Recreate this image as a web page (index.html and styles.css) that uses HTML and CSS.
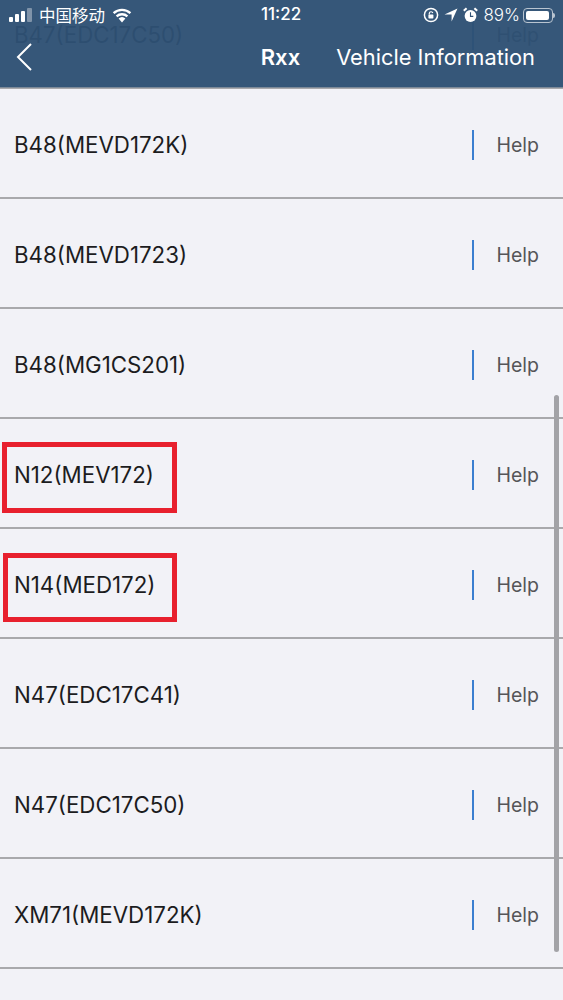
FILE: index.html
```html
<!DOCTYPE html>
<html lang="en">
<head>
<meta charset="utf-8">
<title>Vehicle Information</title>
<link rel="stylesheet" href="styles.css">
</head>
<body>
<div class="screen">
  <ul class="list">
    <li class="row"><span class="name">B47(EDC17C50)</span><span class="help">Help</span></li>
    <li class="row"><span class="name">B48(MEVD172K)</span><span class="help">Help</span></li>
    <li class="row"><span class="name">B48(MEVD1723)</span><span class="help">Help</span></li>
    <li class="row"><span class="name">B48(MG1CS201)</span><span class="help">Help</span></li>
    <li class="row"><span class="name">N12(MEV172)</span><span class="help">Help</span></li>
    <li class="row"><span class="name">N14(MED172)</span><span class="help">Help</span></li>
    <li class="row"><span class="name">N47(EDC17C41)</span><span class="help">Help</span></li>
    <li class="row"><span class="name">N47(EDC17C50)</span><span class="help">Help</span></li>
    <li class="row"><span class="name">XM71(MEVD172K)</span><span class="help">Help</span></li>
  </ul>
  <header class="header">
    <div class="status">
      <div class="status-left">
        <svg class="signal" width="24" height="14" viewBox="0 0 24 14"><rect x="0" y="9" width="4" height="5" rx="1" fill="#fff"/><rect x="6" y="6" width="4" height="8" rx="1" fill="#fff"/><rect x="12" y="3" width="4" height="11" rx="1" fill="#fff"/><rect x="18" y="0" width="5" height="14" rx="1" fill="#7f93a9"/></svg>
        <span class="carrier">中国移动</span>
        <svg class="wifi" width="22" height="16" viewBox="0 0 22 16"><path d="M11 15.5 7.6 11.6a5 5 0 0 1 6.8 0Z" fill="#fff"/><path d="M5.6 9.4a8 8 0 0 1 10.8 0M2.6 6.2a12.4 12.4 0 0 1 16.8 0" fill="none" stroke="#fff" stroke-width="2.4"/></svg>
      </div>
      <span class="time">11:22</span>
      <div class="status-right">
        <svg width="16" height="16" viewBox="0 0 16 16"><circle cx="8" cy="8" r="6.6" fill="none" stroke="#fff" stroke-width="1.5"/><rect x="5.4" y="7.4" width="5" height="4" rx=".6" fill="#fff"/><path d="M6.3 7.4V6.3a1.8 1.8 0 0 1 3.5-.3" fill="none" stroke="#fff" stroke-width="1.2"/></svg>
        <svg class="arrow" width="14" height="14" viewBox="0 0 14 14"><path d="M13.5.5 7.6 13.5V6.5H.5Z" fill="#fff"/></svg>
        <svg class="alarm" width="15" height="16" viewBox="0 0 15 16"><circle cx="7.5" cy="9" r="5.9" fill="#fff"/><path d="M7.5 5.2v4.2h2.8" fill="none" stroke="#325479" stroke-width="1.1"/><path d="M.8 3.8 3.6 1.2M14.2 3.8 11.4 1.2" stroke="#fff" stroke-width="2"/></svg>
        <span class="percent">89%</span>
        <div class="battery"><div class="battery-fill"></div></div>
        <div class="battery-tip"></div>
      </div>
    </div>
    <div class="nav">
      <svg class="back" width="16" height="28" viewBox="0 0 16 28"><path d="M15 1 2 14l13 13" fill="none" stroke="#fff" stroke-width="2"/></svg>
      <div class="tabs">
        <span class="rxx">Rxx</span>
        <span class="vehicle">Vehicle Information</span>
      </div>
    </div>
  </header>
  <div class="mark mark-one"></div>
  <div class="mark mark-two"></div>
  <div class="scrollbar"></div>
</div>
</body>
</html>
```
FILE: styles.css
```css
* { box-sizing: border-box; }
html, body { margin: 0; padding: 0; }
body { background: #f2f2f7; font-family: Inter, Roboto, "Noto Sans", sans-serif; }
.screen { position: relative; width: 563px; height: 1000px; overflow: hidden; background: #f2f2f7; }
.list { list-style: none; margin: -21px 0 0; padding: 0; }
.row { height: 110px; display: flex; align-items: center; justify-content: space-between; padding: 3px 24px 0 14px; border-bottom: 2px solid #a9a9ac; }
.name { font-size: 22.3px; color: #1c1c1e; margin-top: -1px; }
.help { font-size: 19.5px; color: #555558; border-left: 2px solid #3b7fd0; height: 30px; line-height: 30px; padding-left: 22px; }
.header { position: absolute; top: 0; left: 0; width: 563px; height: 88px; background: rgba(46, 80, 116, 0.96); color: #fff; border-bottom: 1px solid #7d8a99; }
.status { height: 30px; position: relative; display: flex; align-items: center; justify-content: space-between; padding: 0 8px 0 9px; }
.status-left, .status-right { display: flex; align-items: center; }
.status-left { gap: 6px; }
.status-right { gap: 5px; }
.carrier { font: 16.5px "Noto Sans CJK SC", sans-serif; }
.time { position: absolute; left: 261px; top: 4px; font-size: 17px; font-weight: 500; }
.percent { font-size: 17px; font-weight: 300; }
.battery { width: 30px; height: 15px; border: 1px solid #b9c4d0; border-radius: 4px; padding: 2px; margin-left: -2px; }
.battery-fill { width: 23px; height: 100%; background: #fff; border-radius: 2px; }
.battery-tip { width: 2px; height: 5px; margin-left: -5px; background: #b9c4d0; border-radius: 0 2px 2px 0; }
.nav { height: 57px; display: flex; align-items: center; justify-content: space-between; padding: 0 28px 4px 16px; }
.tabs { display: flex; gap: 36px; align-items: center; }
.rxx { font-size: 22px; font-weight: 600; }
.vehicle { font-size: 21.8px; }
.mark { position: absolute; border: 5px solid #e8202e; }
.mark-one { left: 2px; top: 442px; width: 175px; height: 71px; }
.mark-two { left: 3px; top: 553px; width: 174px; height: 69px; }
.scrollbar { position: absolute; left: 554px; top: 395px; width: 5px; height: 557px; border-radius: 3px; background: #a3a3a7; }
```
